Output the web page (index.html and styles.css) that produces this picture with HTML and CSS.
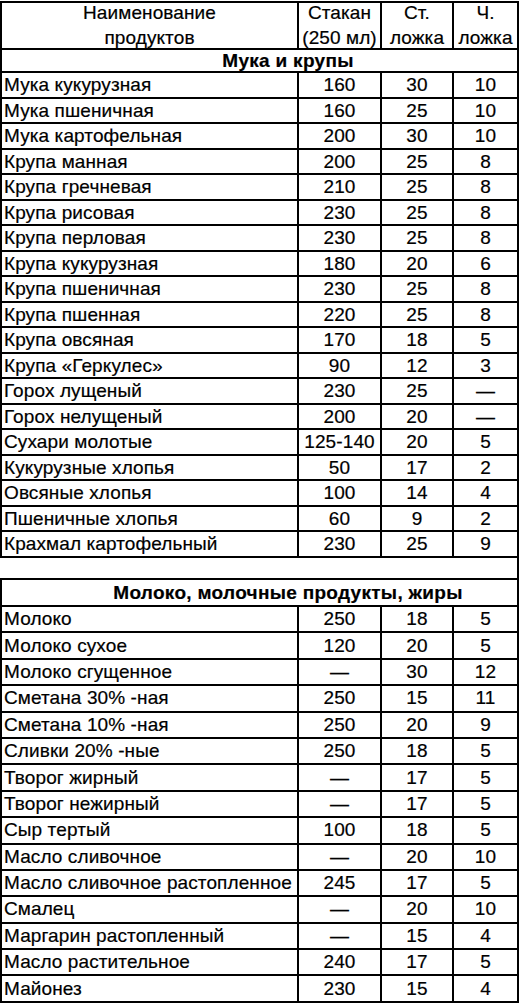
FILE: index.html
```html
<!DOCTYPE html>
<html lang="ru">
<head>
<meta charset="utf-8">
<title>Таблица мер веса продуктов</title>
<link rel="stylesheet" href="styles.css">
</head>
<body>
<div class="page">
  <div class="tbl tbl-first">
    <div class="row head">
      <div class="cell">Наименование<br>продуктов</div>
      <div class="cell">Стакан<br>(250 мл)</div>
      <div class="cell">Ст.<br>ложка</div>
      <div class="cell">Ч.<br>ложка</div>
    </div>
    <div class="section s1"><span>Мука и крупы</span></div>
    <div class="row r1"><div class="cell name">Мука кукурузная</div><div class="cell">160</div><div class="cell">30</div><div class="cell">10</div></div>
    <div class="row r1"><div class="cell name">Мука пшеничная</div><div class="cell">160</div><div class="cell">25</div><div class="cell">10</div></div>
    <div class="row r1"><div class="cell name">Мука картофельная</div><div class="cell">200</div><div class="cell">30</div><div class="cell">10</div></div>
    <div class="row r1"><div class="cell name">Крупа манная</div><div class="cell">200</div><div class="cell">25</div><div class="cell">8</div></div>
    <div class="row r1"><div class="cell name">Крупа гречневая</div><div class="cell">210</div><div class="cell">25</div><div class="cell">8</div></div>
    <div class="row r1"><div class="cell name">Крупа рисовая</div><div class="cell">230</div><div class="cell">25</div><div class="cell">8</div></div>
    <div class="row r1"><div class="cell name">Крупа перловая</div><div class="cell">230</div><div class="cell">25</div><div class="cell">8</div></div>
    <div class="row r1"><div class="cell name">Крупа кукурузная</div><div class="cell">180</div><div class="cell">20</div><div class="cell">6</div></div>
    <div class="row r1"><div class="cell name">Крупа пшеничная</div><div class="cell">230</div><div class="cell">25</div><div class="cell">8</div></div>
    <div class="row r1"><div class="cell name">Крупа пшенная</div><div class="cell">220</div><div class="cell">25</div><div class="cell">8</div></div>
    <div class="row r1"><div class="cell name">Крупа овсяная</div><div class="cell">170</div><div class="cell">18</div><div class="cell">5</div></div>
    <div class="row r1"><div class="cell name">Крупа «Геркулес»</div><div class="cell">90</div><div class="cell">12</div><div class="cell">3</div></div>
    <div class="row r1"><div class="cell name">Горох лущеный</div><div class="cell">230</div><div class="cell">25</div><div class="cell">—</div></div>
    <div class="row r1"><div class="cell name">Горох нелущеный</div><div class="cell">200</div><div class="cell">20</div><div class="cell">—</div></div>
    <div class="row r1"><div class="cell name">Сухари молотые</div><div class="cell">125-140</div><div class="cell">20</div><div class="cell">5</div></div>
    <div class="row r1"><div class="cell name">Кукурузные хлопья</div><div class="cell">50</div><div class="cell">17</div><div class="cell">2</div></div>
    <div class="row r1"><div class="cell name">Овсяные хлопья</div><div class="cell">100</div><div class="cell">14</div><div class="cell">4</div></div>
    <div class="row r1"><div class="cell name">Пшеничные хлопья</div><div class="cell">60</div><div class="cell">9</div><div class="cell">2</div></div>
    <div class="row r1"><div class="cell name">Крахмал картофельный</div><div class="cell">230</div><div class="cell">25</div><div class="cell">9</div></div>
  </div>
  <div class="gap"></div>
  <div class="tbl tbl-second">
    <div class="section s2"><span>Молоко, молочные продукты, жиры</span></div>
    <div class="row r2"><div class="cell name">Молоко</div><div class="cell">250</div><div class="cell">18</div><div class="cell">5</div></div>
    <div class="row r2"><div class="cell name">Молоко сухое</div><div class="cell">120</div><div class="cell">20</div><div class="cell">5</div></div>
    <div class="row r2"><div class="cell name">Молоко сгущенное</div><div class="cell">—</div><div class="cell">30</div><div class="cell">12</div></div>
    <div class="row r2"><div class="cell name">Сметана 30% -ная</div><div class="cell">250</div><div class="cell">15</div><div class="cell">11</div></div>
    <div class="row r2"><div class="cell name">Сметана 10% -ная</div><div class="cell">250</div><div class="cell">20</div><div class="cell">9</div></div>
    <div class="row r2"><div class="cell name">Сливки 20% -ные</div><div class="cell">250</div><div class="cell">18</div><div class="cell">5</div></div>
    <div class="row r2"><div class="cell name">Творог жирный</div><div class="cell">—</div><div class="cell">17</div><div class="cell">5</div></div>
    <div class="row r2"><div class="cell name">Творог нежирный</div><div class="cell">—</div><div class="cell">17</div><div class="cell">5</div></div>
    <div class="row r2"><div class="cell name">Сыр тертый</div><div class="cell">100</div><div class="cell">18</div><div class="cell">5</div></div>
    <div class="row r2"><div class="cell name">Масло сливочное</div><div class="cell">—</div><div class="cell">20</div><div class="cell">10</div></div>
    <div class="row r2"><div class="cell name">Масло сливочное растопленное</div><div class="cell">245</div><div class="cell">17</div><div class="cell">5</div></div>
    <div class="row r2"><div class="cell name">Смалец</div><div class="cell">—</div><div class="cell">20</div><div class="cell">10</div></div>
    <div class="row r2"><div class="cell name">Маргарин растопленный</div><div class="cell">—</div><div class="cell">15</div><div class="cell">4</div></div>
    <div class="row r2"><div class="cell name">Масло растительное</div><div class="cell">240</div><div class="cell">17</div><div class="cell">5</div></div>
    <div class="row r2"><div class="cell name">Майонез</div><div class="cell">230</div><div class="cell">15</div><div class="cell">4</div></div>
  </div>
</div>
</body>
</html>
```
FILE: styles.css
```css
html, body {
  margin: 0;
  padding: 0;
  background: #fff;
}
body {
  font-family: "Liberation Sans", Arial, sans-serif;
  font-size: 19px;
  color: #000;
  -webkit-text-stroke: 0.2px #000;
}
.page {
  width: 519px;
  padding-top: 1px;
}
.tbl {
  border-left: 2px solid #000;
  border-top: 2px solid #000;
  width: 519px;
  box-sizing: border-box;
}
.row {
  display: grid;
  grid-template-columns: 297px 83px 72px 65px;
}
.cell {
  border-right: 2px solid #000;
  border-bottom: 2px solid #000;
  box-sizing: border-box;
  display: flex;
  align-items: center;
  justify-content: center;
  text-align: center;
  white-space: nowrap;
  letter-spacing: 0.1px;
  overflow: visible;
}
.cell.name {
  justify-content: flex-start;
  padding-left: 2px;
}
.head .cell {
  height: 47px;
  line-height: 24.5px;
}
.r1 .cell {
  height: 25.5px;
  line-height: 23px;
}
.r2 .cell {
  height: 26.4px;
  line-height: 24px;
}
.section {
  border-right: 2px solid #000;
  border-bottom: 2px solid #000;
  box-sizing: border-box;
  display: flex;
  align-items: center;
  justify-content: center;
  padding-left: 57px;
  font-weight: bold;
  letter-spacing: 0.3px;
}
.s1 {
  height: 23px;
  line-height: 21px;
}
.s2 {
  height: 27px;
  line-height: 25px;
}
.gap {
  height: 20.5px;
  width: 519px;
  box-sizing: border-box;
  border-right: 2px solid #000;
}
```
